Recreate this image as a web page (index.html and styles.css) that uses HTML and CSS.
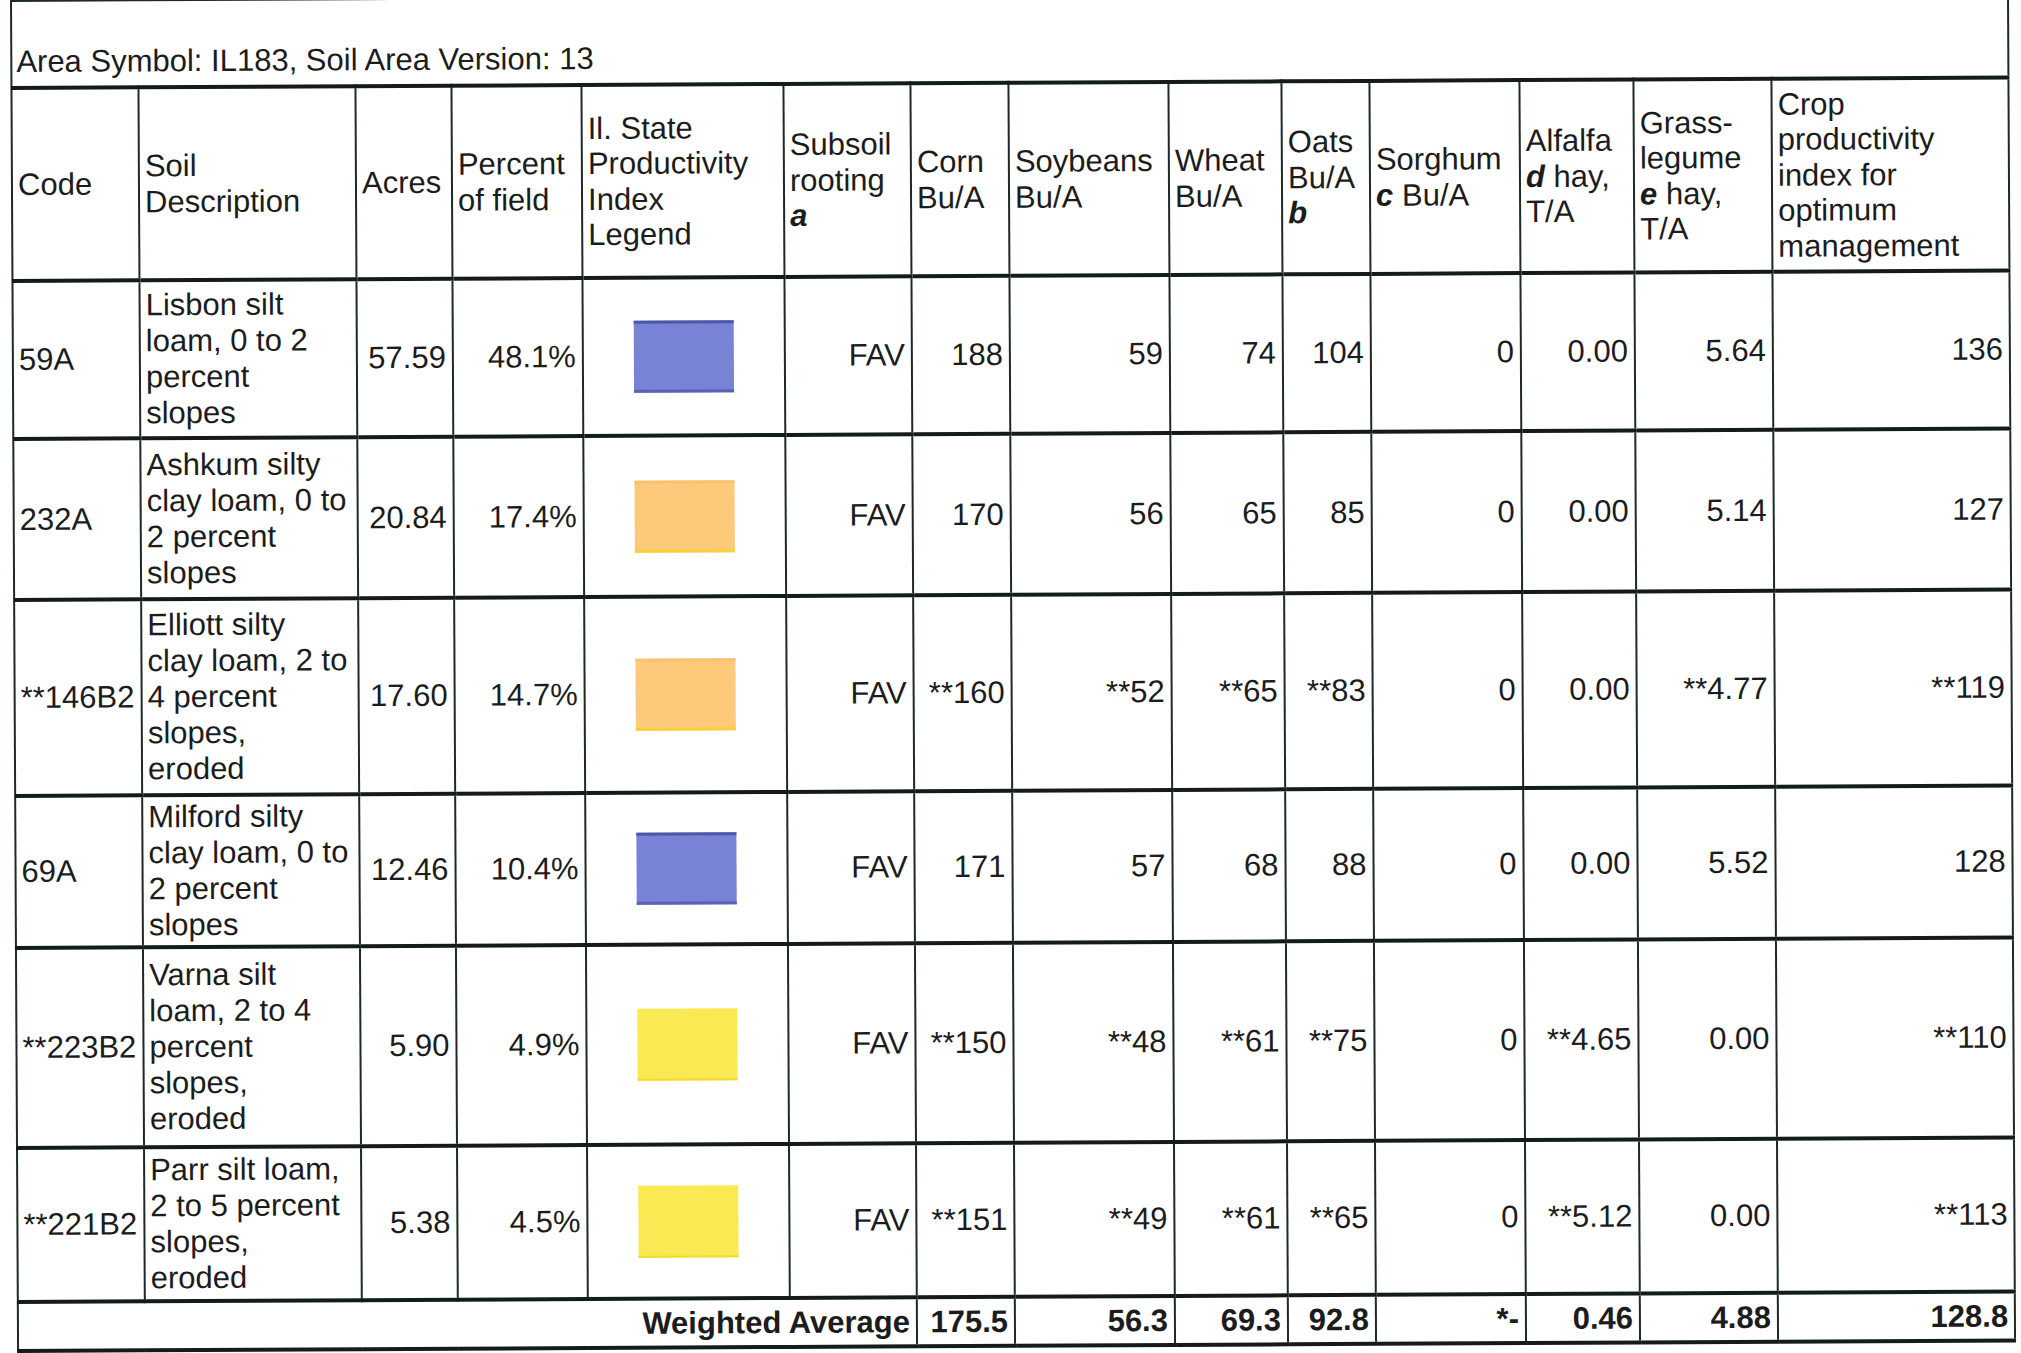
FILE: index.html
```html
<!DOCTYPE html>
<html lang="en">
<head>
<meta charset="utf-8">
<title>Soil Productivity</title>
<link rel="stylesheet" href="styles.css">
</head>
<body>
<div class="page">
<table class="sheet">
  <colgroup>
    <col class="c-code"><col class="c-desc"><col class="c-acres"><col class="c-pct"><col class="c-leg"><col class="c-sub"><col class="c-corn"><col class="c-soy"><col class="c-wheat"><col class="c-oats"><col class="c-sorg"><col class="c-alf"><col class="c-grass"><col class="c-crop">
  </colgroup>
  <thead>
    <tr class="area-row"><td class="area" colspan="14">Area Symbol: IL183, Soil Area Version: 13</td></tr>
    <tr class="head-row">
      <th>Code</th>
      <th>Soil<br>Description</th>
      <th>Acres</th>
      <th>Percent<br>of field</th>
      <th>Il. State<br>Productivity<br>Index<br>Legend</th>
      <th>Subsoil<br>rooting<br><b><i>a</i></b></th>
      <th>Corn<br>Bu/A</th>
      <th>Soybeans<br>Bu/A</th>
      <th>Wheat<br>Bu/A</th>
      <th>Oats<br>Bu/A<br><b><i>b</i></b></th>
      <th>Sorghum<br><b><i>c</i></b> Bu/A</th>
      <th>Alfalfa<br><b><i>d</i></b> hay,<br>T/A</th>
      <th>Grass-<br>legume<br><b><i>e</i></b> hay,<br>T/A</th>
      <th>Crop<br>productivity<br>index for<br>optimum<br>management</th>
    </tr>
  </thead>
  <tbody>
    <tr class="r1">
      <td>59A</td><td>Lisbon silt<br>loam, 0 to 2<br>percent<br>slopes</td><td class="n">57.59</td><td class="n">48.1%</td>
      <td class="leg"><span class="sw blue"></span></td>
      <td class="n">FAV</td><td class="n">188</td><td class="n">59</td><td class="n">74</td><td class="n">104</td><td class="n">0</td><td class="n">0.00</td><td class="n">5.64</td><td class="n">136</td>
    </tr>
    <tr class="r2">
      <td>232A</td><td>Ashkum silty<br>clay loam, 0 to<br>2 percent<br>slopes</td><td class="n">20.84</td><td class="n">17.4%</td>
      <td class="leg"><span class="sw orange"></span></td>
      <td class="n">FAV</td><td class="n">170</td><td class="n">56</td><td class="n">65</td><td class="n">85</td><td class="n">0</td><td class="n">0.00</td><td class="n">5.14</td><td class="n">127</td>
    </tr>
    <tr class="r3">
      <td>**146B2</td><td>Elliott silty<br>clay loam, 2 to<br>4 percent<br>slopes,<br>eroded</td><td class="n">17.60</td><td class="n">14.7%</td>
      <td class="leg"><span class="sw orange"></span></td>
      <td class="n">FAV</td><td class="n">**160</td><td class="n">**52</td><td class="n">**65</td><td class="n">**83</td><td class="n">0</td><td class="n">0.00</td><td class="n">**4.77</td><td class="n">**119</td>
    </tr>
    <tr class="r4">
      <td>69A</td><td>Milford silty<br>clay loam, 0 to<br>2 percent<br>slopes</td><td class="n">12.46</td><td class="n">10.4%</td>
      <td class="leg"><span class="sw blue"></span></td>
      <td class="n">FAV</td><td class="n">171</td><td class="n">57</td><td class="n">68</td><td class="n">88</td><td class="n">0</td><td class="n">0.00</td><td class="n">5.52</td><td class="n">128</td>
    </tr>
    <tr class="r5">
      <td>**223B2</td><td>Varna silt<br>loam, 2 to 4<br>percent<br>slopes,<br>eroded</td><td class="n">5.90</td><td class="n">4.9%</td>
      <td class="leg"><span class="sw yellow"></span></td>
      <td class="n">FAV</td><td class="n">**150</td><td class="n">**48</td><td class="n">**61</td><td class="n">**75</td><td class="n">0</td><td class="n">**4.65</td><td class="n">0.00</td><td class="n">**110</td>
    </tr>
    <tr class="r6">
      <td>**221B2</td><td>Parr silt loam,<br>2 to 5 percent<br>slopes,<br>eroded</td><td class="n">5.38</td><td class="n">4.5%</td>
      <td class="leg"><span class="sw yellow"></span></td>
      <td class="n">FAV</td><td class="n">**151</td><td class="n">**49</td><td class="n">**61</td><td class="n">**65</td><td class="n">0</td><td class="n">**5.12</td><td class="n">0.00</td><td class="n">**113</td>
    </tr>
  </tbody>
  <tfoot>
    <tr class="foot">
      <td class="n" colspan="6">Weighted Average</td>
      <td class="n">175.5</td><td class="n">56.3</td><td class="n">69.3</td><td class="n">92.8</td><td class="n">*-</td><td class="n">0.46</td><td class="n">4.88</td><td class="n">128.8</td>
    </tr>
  </tfoot>
</table>
</div>
</body>
</html>
```
FILE: styles.css
```css
html, body {
  margin: 0;
  padding: 0;
  background: #ffffff;
}

.page {
  width: 2021px;
  height: 1353px;
  overflow: hidden;
  padding-left: 10px;
  box-sizing: border-box;
}

.sheet {
  width: 1997px;
  table-layout: fixed;
  border-collapse: collapse;
  font-family: "Liberation Sans", Arial, sans-serif;
  font-size: 31px;
  line-height: 36px;
  color: #1c1c1c;
  transform: rotate(-0.3deg);
  transform-origin: 0 0;
}

.c-code { width: 127px; }
.c-desc { width: 217px; }
.c-acres { width: 96px; }
.c-pct { width: 130px; }
.c-leg { width: 202px; }
.c-sub { width: 127px; }
.c-corn { width: 98px; }
.c-soy { width: 160px; }
.c-wheat { width: 113px; }
.c-oats { width: 88px; }
.c-sorg { width: 150px; }
.c-alf { width: 114px; }
.c-grass { width: 138px; }
.c-crop { width: 237px; }

.sheet td,
.sheet th {
  border: 2px solid #1d2a27;
  padding: 0 6px 0 5px;
  vertical-align: middle;
  text-align: left;
  white-space: nowrap;
  overflow: hidden;
  font-weight: normal;
}

.sheet tbody td,
.sheet tfoot td,
.sheet .head-row th {
  border-top: 4px solid #141c1a;
}

.area-row td {
  height: 78px;
  vertical-align: bottom;
  padding-bottom: 6px;
  padding-left: 4px;
  border-bottom: 4px solid #141c1a;
}

.head-row th {
  height: 189px;
  line-height: 35.5px;
}

.r1 td { height: 154px; }
.r2 td { height: 157px; }
.r3 td { height: 192px; }
.r4 td { height: 148px; }
.r5 td { height: 196px; }
.r6 td { height: 150px; }

.sheet td.n {
  text-align: right;
}

.sheet td.leg {
  text-align: center;
  padding: 0;
}

.sw {
  display: inline-block;
  width: 100px;
  height: 72px;
  vertical-align: middle;
  box-sizing: border-box;
}

.sw.blue {
  background: #7883d5;
  border-top: 3px solid #4d57a6;
  border-bottom: 3px solid #5a63b2;
}

.sw.orange {
  background: #fcca7a;
  border-top: 3px solid #f6c36f;
  border-bottom: 3px solid #f8d13a;
}

.sw.yellow {
  background: #fbe953;
  border-bottom: 2px solid #f2dc2a;
}

.foot td {
  height: 45px;
  font-weight: bold;
  border-bottom: 4px solid #141c1a;
}
```
